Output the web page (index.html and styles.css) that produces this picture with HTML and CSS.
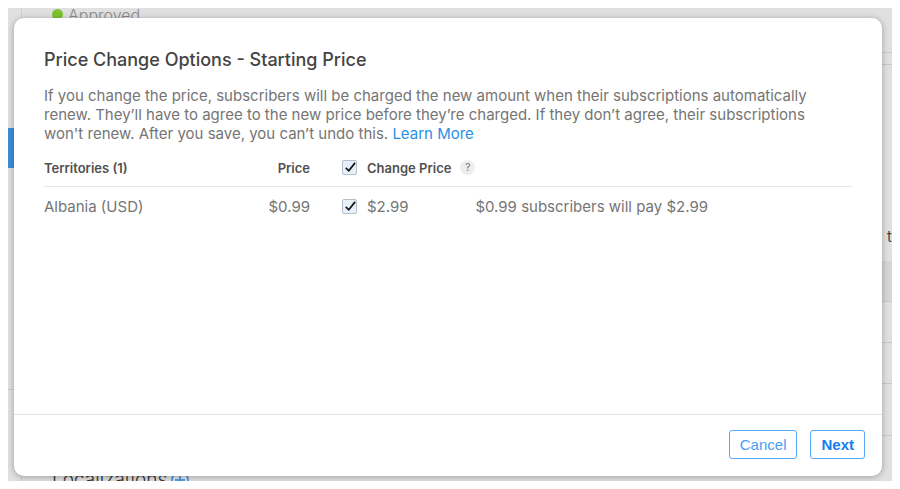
FILE: index.html
```
<!DOCTYPE html>
<html lang="en">
<head>
    <meta charset="UTF-8">
    <meta name="viewport" content="width=device-width, initial-scale=1.0">
    <title>Price Change Options</title>
    <link rel="stylesheet" href="styles.css">
</head>
<body>

    <div class="page">
        <div class="sidebar">
            <div class="sidebar-top"></div>
            <div class="sidebar-selected"></div>
            <div class="sidebar-list"></div>
        </div>

        <div class="content">
            <div class="status"><span class="dot"></span>Approved</div>
            <div class="divider"></div>
            <div class="panel">t</div>
            <div class="row row-head"></div>
            <div class="row"></div>
            <div class="row"></div>
            <div class="row row-last"></div>
            <h2 class="section-title">Localizations <a href="#add" class="add" aria-label="Add localization"><svg width="18" height="18" viewBox="0 0 18 18" fill="none" stroke="currentColor" stroke-width="1.5"><circle cx="9" cy="9" r="8"/><path d="M9 4v10M4 9h10"/></svg></a></h2>
        </div>

        <div class="modal" role="dialog" aria-labelledby="modalTitle">
            <div class="modal-body">
                <h1 id="modalTitle">Price Change Options - Starting Price</h1>
                <p>If you change the price, subscribers will be charged the new amount when their subscriptions automatically renew. They’ll have to agree to the new price before they’re charged. If they don’t agree, their subscriptions won't renew. After you save, you can’t undo this. <a href="#learn">Learn More</a></p>

                <table>
                    <thead>
                        <tr>
                            <th class="territory">Territories (1)</th>
                            <th class="price">Price</th>
                            <th class="change">
                                <div class="option">
                                    <input type="checkbox" id="changeAll" checked>
                                    <label for="changeAll">Change Price</label>
                                    <button type="button" class="help" aria-label="Help">?</button>
                                </div>
                            </th>
                            <th></th>
                        </tr>
                    </thead>
                    <tbody>
                        <tr>
                            <td>Albania (USD)</td>
                            <td class="price">$0.99</td>
                            <td class="change">
                                <div class="option">
                                    <input type="checkbox" id="changeAlbania" checked>
                                    <label for="changeAlbania">$2.99</label>
                                </div>
                            </td>
                            <td>$0.99 subscribers will pay $2.99</td>
                        </tr>
                    </tbody>
                </table>
            </div>

            <div class="modal-footer">
                <button type="button" class="btn">Cancel</button>
                <button type="button" class="btn btn-primary">Next</button>
            </div>
        </div>
    </div>

</body>
</html>
```
FILE: styles.css
```
* { box-sizing: border-box; }
body { margin: 0; padding: 8px; background-color: #fff; color: #757575; font-family: Inter, "Liberation Sans", sans-serif; font-size: 15px; font-weight: 400; }
a { color: #2a8fe6; text-decoration: none; }

/* page behind the dialog */
.page { position: relative; display: flex; height: calc(100vh - 16px); overflow: hidden; background-color: #e0e0e0; }
.sidebar { display: flex; flex-direction: column; width: 14px; flex-shrink: 0; border-right: 1px solid #cfcfcf; }
.sidebar-top { height: 120px; flex-shrink: 0; }
.sidebar-selected { height: 40px; flex-shrink: 0; background-color: #3c8fd9; }
.sidebar-list { height: 222px; flex-shrink: 0; border-bottom: 1px solid #c8c8c8; }
.content { flex-grow: 1; }
.status { display: flex; align-items: center; gap: 5px; height: 13px; padding-left: 30px; color: #8a8a8a; font-size: 16px; font-weight: 300; }
.dot { width: 11px; height: 11px; border-radius: 50%; background-color: #7cc52e; }
.divider { height: 32px; border-bottom: 1px solid #c8c8c8; }
.panel { display: flex; align-items: flex-end; justify-content: flex-end; height: 197px; margin-top: 11px; padding-bottom: 15px; border-top: 1px solid #c8c8c8; color: #444; }
.row { height: 41px; border-bottom: 1px solid #c8c8c8; }
.row-head { background-color: #d6d6d6; }
.row-last { height: 52px; }
.section-title { display: flex; align-items: center; gap: 4px; margin: 33px 0 0; padding-left: 30px; color: #333; font-size: 19px; font-weight: 300; line-height: 22px; }
.add { display: flex; }

.modal { position: absolute; top: 10px; right: 10px; bottom: 5px; left: 6px; display: flex; flex-direction: column; border-radius: 10px; background-color: #fff; box-shadow: 0 1px 6px rgba(0, 0, 0, 0.3); }
.modal-body { flex-grow: 1; padding: 31px 30px 0; }
.modal h1 { margin: 0 0 15px; color: #444; font-size: 18px; font-weight: 500; line-height: 22px; }
.modal p { margin: 0; padding-right: 24px; line-height: 19px; }

table { width: 100%; margin-top: 7px; border-collapse: collapse; }
th, td { height: 40px; padding: 0; text-align: left; }
th { height: 36px; border-bottom: 1px solid #e6e6e6; color: #505050; font-size: 13px; font-weight: 600; }
.territory { width: 190px; }
.price { width: 76px; text-align: right; }
.change { width: 164px; padding-left: 32px; }
.option { display: flex; align-items: center; white-space: nowrap; }
.option input { appearance: none; width: 15px; height: 15px; margin: 0 10px 0 0; border: 1px solid #b4bfca; border-radius: 2px; background-color: #e6f0fb; }
.option input:checked { background-image: url("data:image/svg+xml,%3Csvg xmlns='http://www.w3.org/2000/svg' viewBox='0 0 14 14'%3E%3Cpath d='M3 7.5l3.2 3L13 2' fill='none' stroke='%23111' stroke-width='1.8'/%3E%3C/svg%3E"); }
.help { width: 15px; height: 15px; margin-left: 9px; padding: 0; border: none; border-radius: 50%; background-color: #eee; color: #777; font: 400 11px/15px Inter, sans-serif; }

.modal-footer { display: flex; justify-content: flex-end; gap: 13px; padding: 15px 17px 17px; border-top: 1px solid #e2e2e2; }
.btn { height: 29px; padding: 0 10px; border: 1px solid #5aaaf5; border-radius: 3px; background-color: #fff; color: #4a9df2; font: 400 15px "Liberation Sans", Arial, sans-serif; cursor: pointer; }
.btn-primary { color: #127fee; font-weight: bold; }
```
